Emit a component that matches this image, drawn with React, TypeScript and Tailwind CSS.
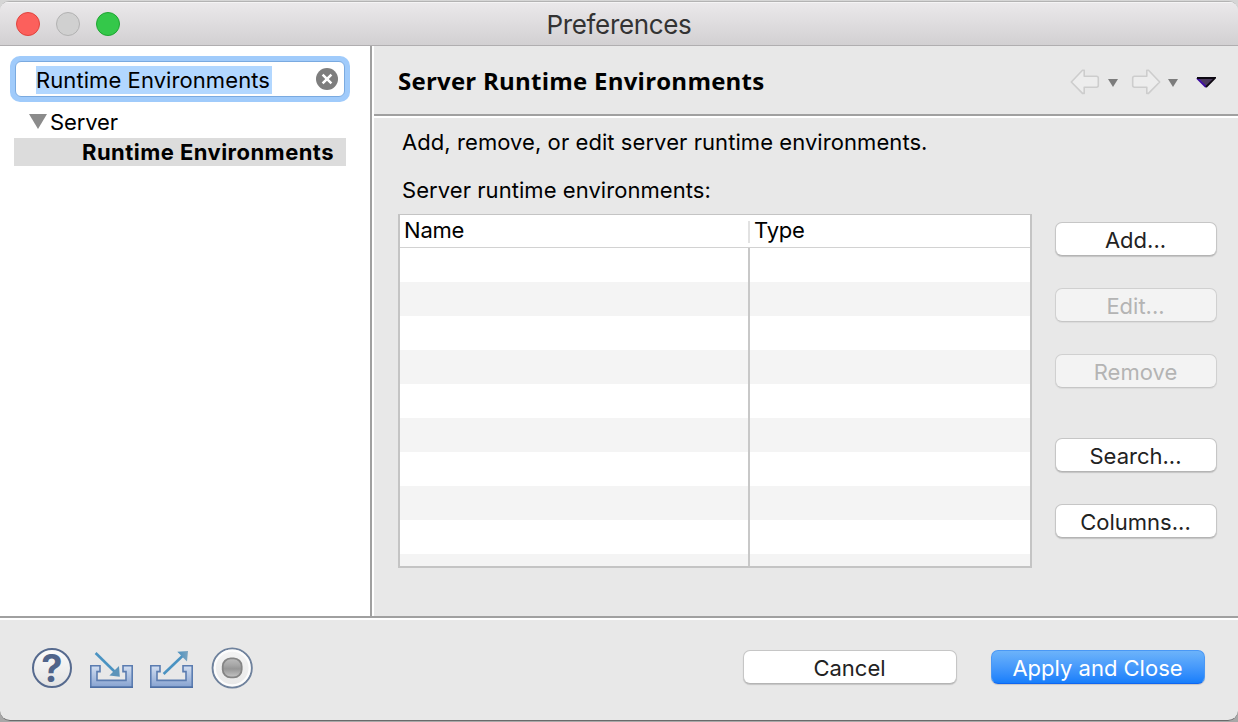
import type { ReactNode } from "react";

const rows = Array.from({ length: 10 }, (_, i) => i);

function PushButton({ children, disabled = false, className = "" }: { children: ReactNode; disabled?: boolean; className?: string }) {
  const look = disabled
    ? "border-[#d0d0d0] border-b-[#c6c6c6] bg-[#f3f3f3] text-[#b4b4b4] shadow-[0_1px_1px_rgba(0,0,0,0.06)]"
    : "border-[#c6c6c6] border-b-[#b4b4b4] bg-white text-[#222] shadow-[0_1px_1px_rgba(0,0,0,0.16)]";
  return (
    <button disabled={disabled} className={`flex h-[34px] items-center justify-center whitespace-nowrap rounded-[7px] border pt-[2px] pr-px leading-none ${look} ${className}`}>
      {children}
    </button>
  );
}

function NavArrow({ flip = false }: { flip?: boolean }) {
  return (
    <svg width="30" height="26" viewBox="0 0 30 26" className={flip ? "-scale-x-100" : ""}>
      <path d="M1.3 13 L12.5 1.2 H14.2 V7.2 H26.5 Q28.3 7.2 28.3 9 V16.6 Q28.3 18.2 26.5 18.2 H14.2 V24.4 H12.5 Z" fill="#ededed" stroke="#cdcdcd" strokeWidth="1.6" strokeLinejoin="round" />
    </svg>
  );
}

function SmallCaret() {
  return (
    <svg width="10" height="8" viewBox="0 0 10 8">
      <path d="M0 0 H10 L5 8 Z" fill="#7c7c7c" />
    </svg>
  );
}

function TrayIcon({ out = false }: { out?: boolean }) {
  const id = out ? "trayOut" : "trayIn";
  return (
    <svg width="44" height="40" viewBox="0 0 44 40">
      <defs>
        <linearGradient id={id} x1="0" y1="0" x2="0" y2="1">
          <stop offset="0" stopColor="#d3dff1" />
          <stop offset="1" stopColor="#86a2d0" />
        </linearGradient>
        <linearGradient id={id + "Head"} x1="0" y1="0" x2="1" y2="0">
          <stop offset="0" stopColor="#4a90bf" />
          <stop offset="1" stopColor="#7aa4c0" />
        </linearGradient>
      </defs>
      <path d="M0.8 15.8 H10 V21.6 H7 V30.4 H36 V21.6 H33 V15.8 H42.2 V37.2 H0.8 Z" fill={`url(#${id})`} stroke="#5b7cb0" strokeWidth="1.6" />
      <path d="M0 37.3 H43" stroke="#4d6ea3" strokeWidth="1.4" />
      {out ? (
        <>
          <path d="M13.6 24 L33 5.5" stroke="#4a93c2" strokeWidth="2.6" />
          <path d="M27.3 1.8 L38 1 L37 11.6 Z" fill="url(#trayOutHead)" />
        </>
      ) : (
        <>
          <path d="M5.6 3 L25 22" stroke="#4a93c2" strokeWidth="2.6" />
          <path d="M29 16 L29.8 26.8 L19.4 25.4 Z" fill="#5c94ba" />
        </>
      )}
    </svg>
  );
}

function RecordIcon() {
  return (
    <svg width="42" height="42" viewBox="0 0 42 42">
      <defs>
        <linearGradient id="rec" x1="0" y1="0" x2="0" y2="1">
          <stop offset="0" stopColor="#bcbcbc" />
          <stop offset="0.35" stopColor="#a7a7a7" />
          <stop offset="0.55" stopColor="#969696" />
          <stop offset="1" stopColor="#c6c6c6" />
        </linearGradient>
        <linearGradient id="recRing" x1="0" y1="0" x2="0" y2="1">
          <stop offset="0" stopColor="#f4f4f4" />
          <stop offset="1" stopColor="#e8e8e8" />
        </linearGradient>
      </defs>
      <circle cx="21.2" cy="21" r="19.6" fill="url(#recRing)" stroke="#6f829d" strokeWidth="2" />
      <circle cx="21.2" cy="21" r="17.4" fill="none" stroke="#fcfcfc" strokeWidth="2.2" />
      <rect x="11.7" y="11.4" width="19" height="19" rx="8" fill="url(#rec)" stroke="#858585" strokeWidth="1.8" />
    </svg>
  );
}

function HelpIcon() {
  return (
    <div className="flex size-10 items-center justify-center rounded-full border-2 border-[#566a8e] bg-gradient-to-b from-[#fbfbfb] to-[#e3e3e3]">
      <span className="text-[38px] leading-[46px] font-bold text-[#50648a]">?</span>
    </div>
  );
}

export default function App() {
  return (
    <div className="h-[722px] w-[1238px] overflow-hidden bg-gradient-to-b from-[#d6d6d6] to-[#a8a8a8] font-['Inter',sans-serif] text-[22px] leading-[28px] text-black">
      <div className="mt-px flex h-[720px] flex-col overflow-hidden rounded-t-[9px] rounded-b-[10px] border-t border-b border-t-[#b3b3b3] border-b-[#6a6a6a] bg-[#e8e8e8]">
        <header className="grid h-[44px] shrink-0 grid-cols-[1fr_auto_1fr] items-center border-b border-[#b0aeb0] bg-gradient-to-b from-[#ebe9eb] to-[#d2d0d2] shadow-[inset_0_1px_0_#f5f4f5]">
          <div className="flex gap-4 pl-4">
            <span className="size-6 rounded-full border border-[#e0443e] bg-[#fc605c]" />
            <span className="size-6 rounded-full border border-[#b2b2b2] bg-[#d0d0d0]" />
            <span className="size-6 rounded-full border border-[#1fa532] bg-[#34c84a]" />
          </div>
          <h1 className="pt-[3px] text-[26px] leading-8 tracking-[-0.34px] text-[#333]">Preferences</h1>
        </header>

        <main className="flex h-[570px] shrink-0">
          <aside className="w-[372px] shrink-0 border-r-2 border-[#a0a0a0] bg-white pt-[10px]">
            <div className="ml-[10px] h-[46px] w-[340px] rounded-[10px] bg-[#a0cbfb] p-[5px]">
              <div className="flex h-full items-center justify-between rounded-[6px] border border-[#7aaae0] bg-white pr-[6px] pl-5">
                <span className="mt-[2px] h-7 w-[236px] whitespace-nowrap bg-[#b2d7ff] tracking-[0.08px]">Runtime Environments</span>
                <svg width="22" height="22" viewBox="0 0 22 22">
                  <circle cx="11" cy="11" r="11" fill="#7e7e7e" />
                  <path d="M6.6 6.6 L15.4 15.4 M15.4 6.6 L6.6 15.4" stroke="#fff" strokeWidth="2.5" />
                </svg>
              </div>
            </div>
            <div className="mt-[5px] flex h-[30px] items-center pl-[29px]">
              <svg className="-mt-px" width="18" height="15" viewBox="0 0 18 15">
                <path d="M0 0 H18 L9 15 Z" fill="#8b8b8b" />
              </svg>
              <span className="pl-[3px] tracking-[-0.1px]">Server</span>
            </div>
            <div className="mt-px ml-[14px] h-7 w-[332px] whitespace-nowrap bg-[#dcdcdc] pl-[68px] font-bold tracking-[0.46px]">Runtime Environments</div>
          </aside>

          <section className="flex-1 border-l-2 border-white">
            <div className="flex h-[70px] items-center justify-between border-b-2 border-[#a0a0a0] pr-[22px] pl-6">
              <h2 className="pt-[2px] font-['Open_Sans',sans-serif] text-[24px] font-bold tracking-[0.24px]">Server Runtime Environments</h2>
              <div className="flex items-center pt-[3px]">
                <NavArrow />
                <div className="pt-[3px] pl-2"><SmallCaret /></div>
                <div className="pl-[13px]"><NavArrow flip /></div>
                <div className="pt-[3px] pl-[7px]"><SmallCaret /></div>
                <svg className="mt-[2px] ml-[18px]" width="20" height="11" viewBox="0 0 20 11">
                  <path d="M2.2 1 H17.8 L10 9.6 Z" fill="#4b3a5e" />
                  <path d="M1 1 L10 10 " stroke="#3c0aa0" strokeWidth="2" />
                  <path d="M1 1 H19 L10 10" fill="none" stroke="#0d0812" strokeWidth="1.8" />
                </svg>
              </div>
            </div>
            <div className="flex h-[500px] border-t-2 border-white pl-6">
              <div className="w-[634px] shrink-0">
                <p className="mt-[10px] ml-1 whitespace-nowrap tracking-[0.07px]">Add, remove, or edit server runtime environments.</p>
                <p className="mt-5 ml-1 whitespace-nowrap tracking-[0.06px]">Server runtime environments:</p>
                <div className="mt-[10px] flex h-[354px] flex-col overflow-hidden border-x-2 border-t border-b-2 border-[#c4c4c4] bg-white">
                  <div className="flex h-[33px] shrink-0 items-center border-b border-[#d2d2d2]">
                    <span className="w-[348px] pb-[2px] pl-1 tracking-[-0.2px]">Name</span>
                    <span className="mt-px h-[22px] w-[2px] bg-[#e2e2e2]" />
                    <span className="pb-[2px] pl-1 tracking-[-0.2px]">Type</span>
                  </div>
                  <div className="flex min-h-0 flex-1">
                    <div className="w-[350px] border-r-2 border-[#c8c8c8]">
                      {rows.map((r) => <div key={r} className="h-[34px] odd:bg-white even:bg-[#f4f4f4]" />)}
                    </div>
                    <div className="flex-1">
                      {rows.map((r) => <div key={r} className="h-[34px] odd:bg-white even:bg-[#f4f4f4]" />)}
                    </div>
                  </div>
                </div>
              </div>
              <div className="ml-[23px] flex w-[162px] flex-col pt-[104px]">
                <PushButton>Add...</PushButton>
                <PushButton disabled className="mt-8">Edit...</PushButton>
                <PushButton disabled className="mt-8">Remove</PushButton>
                <PushButton className="mt-[50px]">Search...</PushButton>
                <PushButton className="mt-8">Columns...</PushButton>
              </div>
            </div>
          </section>
        </main>

        <footer className="flex flex-1 items-start justify-between border-t-2 border-[#a0a0a0] shadow-[inset_0_2px_0_#fff]">
          <div className="flex pt-[29px] pl-8">
            <div className="pt-px"><HelpIcon /></div>
            <div className="ml-[18px] pt-[3px]"><TrayIcon /></div>
            <div className="ml-4 pt-[3px]"><TrayIcon out /></div>
            <div className="ml-[17px]"><RecordIcon /></div>
          </div>
          <div className="flex gap-[34px] pt-8 pr-[33px]">
            <PushButton className="w-[214px]">Cancel</PushButton>
            <button className="flex h-[34px] w-[214px] items-center justify-center whitespace-nowrap rounded-[7px] border border-[#4a98f5] border-b-[#0f66f0] bg-gradient-to-b from-[#6cb3fa] to-[#157efb] pt-[2px] pr-px leading-none text-white shadow-[0_1px_1px_rgba(0,0,0,0.15)]">
              Apply and Close
            </button>
          </div>
        </footer>
      </div>
    </div>
  );
}
